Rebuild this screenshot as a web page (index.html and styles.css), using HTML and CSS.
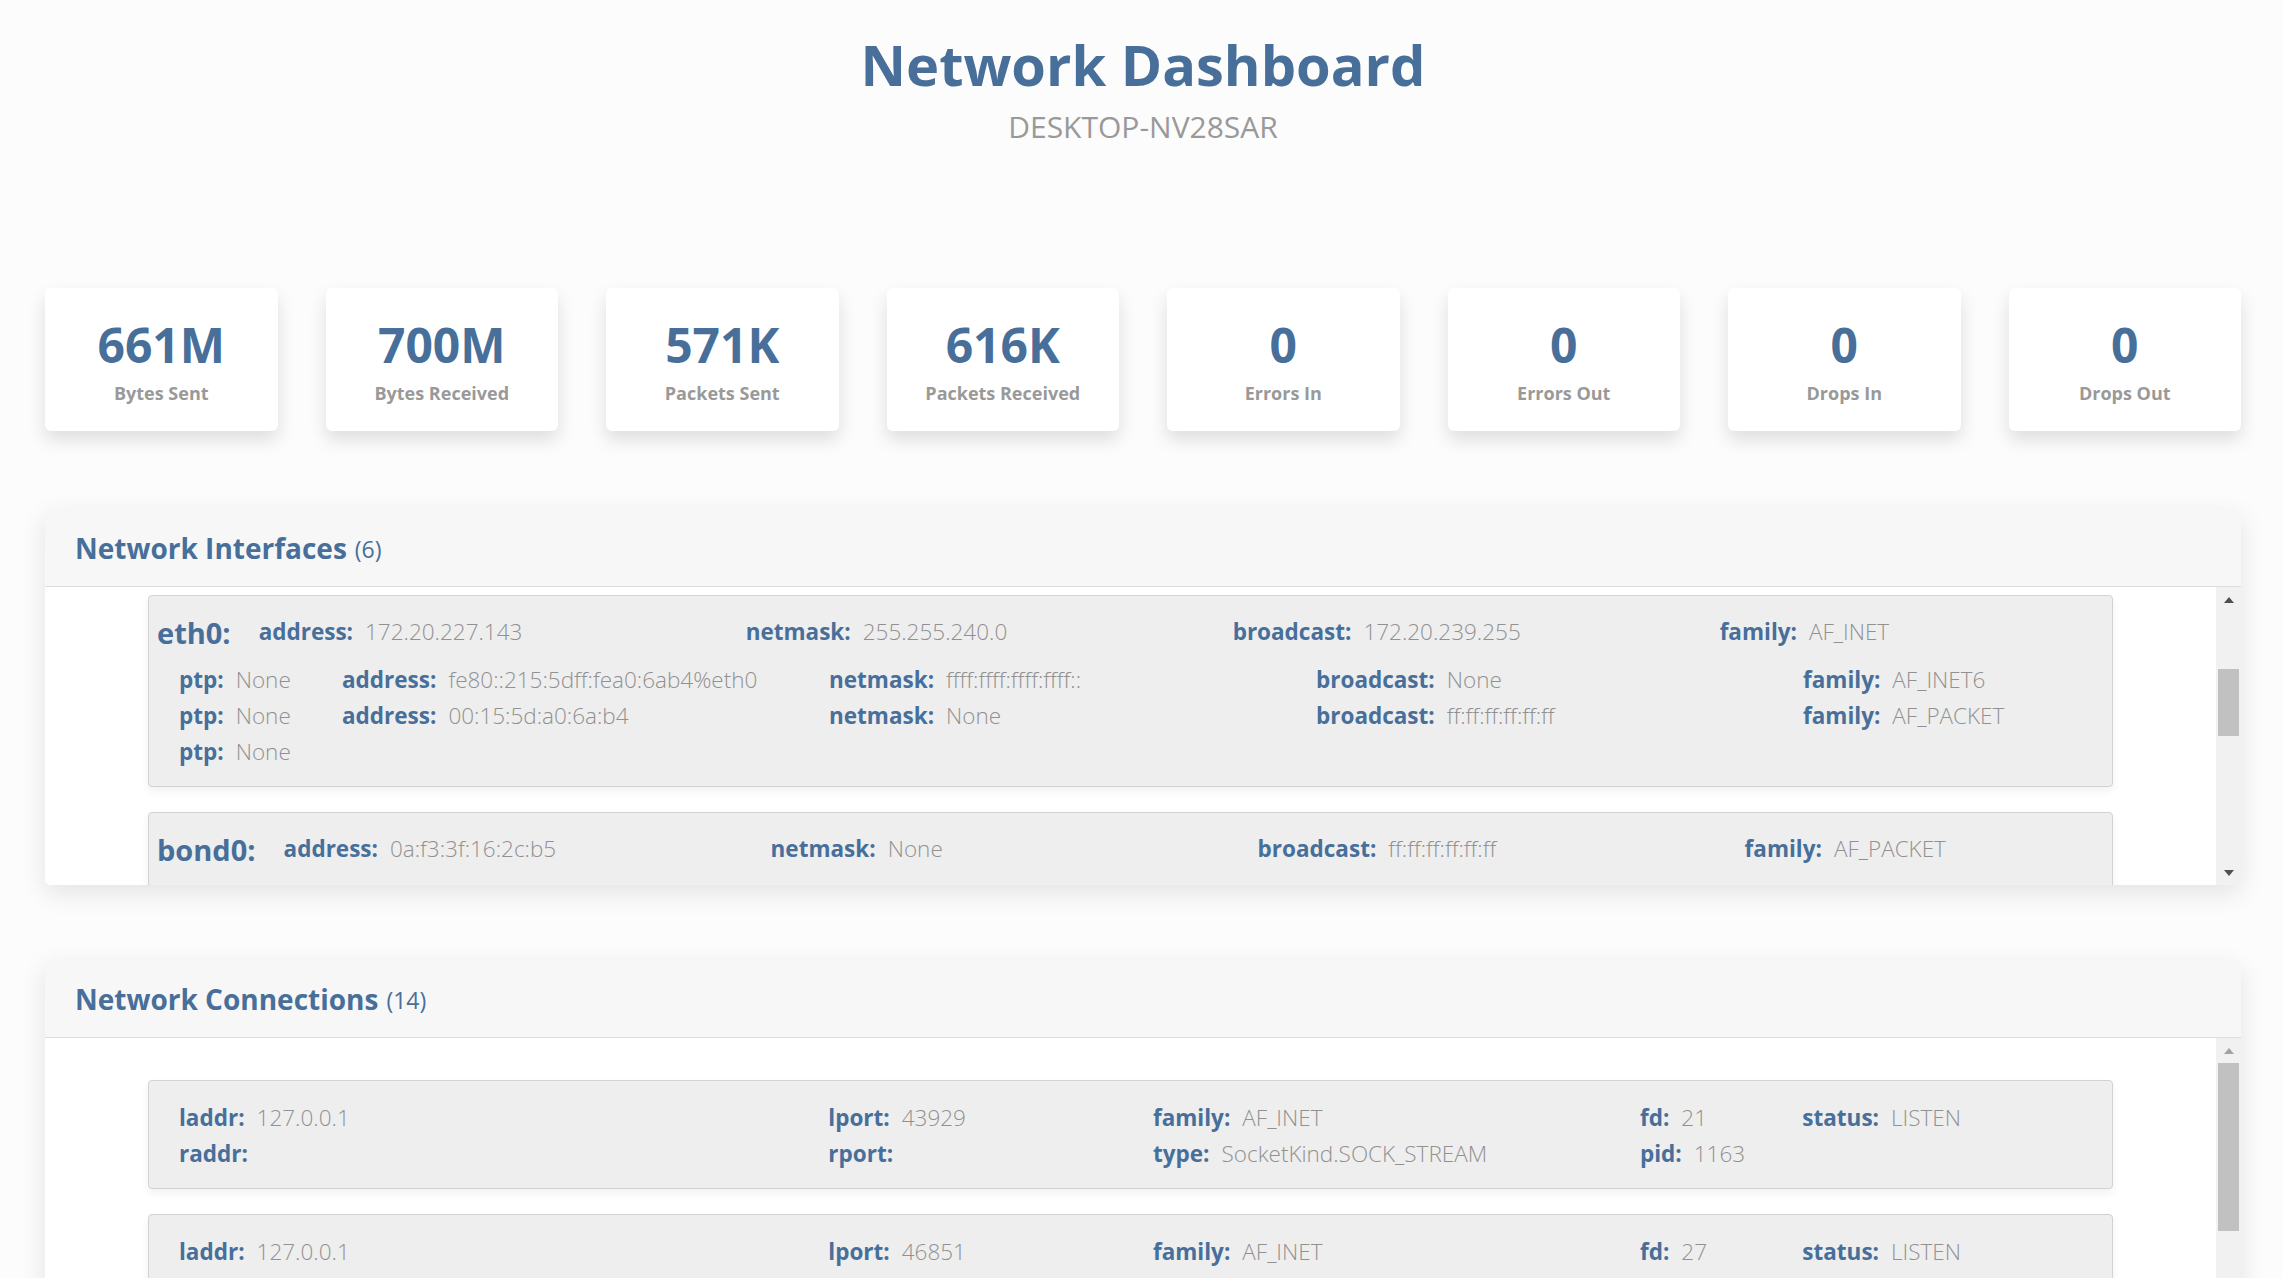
FILE: index.html
```html
<!DOCTYPE html>
<html lang="en">
<head>
<meta charset="utf-8">
<title>Network Dashboard</title>
<link rel="stylesheet" href="styles.css">
</head>
<body>
<div class="page">
  <header class="top">
    <h1 class="title">Network Dashboard</h1>
    <p class="host">DESKTOP-NV28SAR</p>
  </header>

  <section class="stats">
    <div class="stat"><div class="stat-num">661M</div><div class="stat-label">Bytes Sent</div></div>
    <div class="stat"><div class="stat-num">700M</div><div class="stat-label">Bytes Received</div></div>
    <div class="stat"><div class="stat-num">571K</div><div class="stat-label">Packets Sent</div></div>
    <div class="stat"><div class="stat-num">616K</div><div class="stat-label">Packets Received</div></div>
    <div class="stat"><div class="stat-num">0</div><div class="stat-label">Errors In</div></div>
    <div class="stat"><div class="stat-num">0</div><div class="stat-label">Errors Out</div></div>
    <div class="stat"><div class="stat-num">0</div><div class="stat-label">Drops In</div></div>
    <div class="stat"><div class="stat-num">0</div><div class="stat-label">Drops Out</div></div>
  </section>

  <section class="panel" id="ifaces">
    <div class="panel-head"><span class="panel-title">Network Interfaces</span><span class="count">(6)</span></div>
    <div class="panel-body">
      <div class="list">
        <div class="item iface">
          <div class="if-row"><span class="if-name">lo:</span>
            <span class="cell"><b class="k">address:</b><span class="v">127.0.0.1</span></span>
            <span class="cell"><b class="k">netmask:</b><span class="v">255.0.0.0</span></span>
            <span class="cell"><b class="k">broadcast:</b><span class="v">None</span></span>
            <span class="cell"><b class="k">family:</b><span class="v">AF_INET</span></span>
          </div>
          <div class="sub">
            <div class="sub-row"><span class="ptp"><b class="k">ptp:</b><span class="v">None</span></span>
              <span class="cell"><b class="k">address:</b><span class="v">::1</span></span>
              <span class="cell"><b class="k">netmask:</b><span class="v">ffff:ffff:ffff:ffff:ffff:ffff:ffff:ffff</span></span>
              <span class="cell"><b class="k">broadcast:</b><span class="v">None</span></span>
              <span class="cell"><b class="k">family:</b><span class="v">AF_INET6</span></span>
            </div>
            <div class="sub-row"><span class="ptp"><b class="k">ptp:</b><span class="v">None</span></span>
              <span class="cell"><b class="k">address:</b><span class="v">00:00:00:00:00:00</span></span>
              <span class="cell"><b class="k">netmask:</b><span class="v">None</span></span>
              <span class="cell"><b class="k">broadcast:</b><span class="v">None</span></span>
              <span class="cell"><b class="k">family:</b><span class="v">AF_PACKET</span></span>
            </div>
            <div class="sub-row"><span class="ptp"><b class="k">ptp:</b><span class="v">None</span></span></div>
          </div>
        </div>

        <div class="item iface" id="if-eth0">
          <div class="if-row"><span class="if-name">eth0:</span>
            <span class="cell"><b class="k">address:</b><span class="v">172.20.227.143</span></span>
            <span class="cell"><b class="k">netmask:</b><span class="v">255.255.240.0</span></span>
            <span class="cell"><b class="k">broadcast:</b><span class="v">172.20.239.255</span></span>
            <span class="cell"><b class="k">family:</b><span class="v">AF_INET</span></span>
          </div>
          <div class="sub">
            <div class="sub-row"><span class="ptp"><b class="k">ptp:</b><span class="v">None</span></span>
              <span class="cell"><b class="k">address:</b><span class="v">fe80::215:5dff:fea0:6ab4%eth0</span></span>
              <span class="cell"><b class="k">netmask:</b><span class="v">ffff:ffff:ffff:ffff::</span></span>
              <span class="cell"><b class="k">broadcast:</b><span class="v">None</span></span>
              <span class="cell"><b class="k">family:</b><span class="v">AF_INET6</span></span>
            </div>
            <div class="sub-row"><span class="ptp"><b class="k">ptp:</b><span class="v">None</span></span>
              <span class="cell"><b class="k">address:</b><span class="v">00:15:5d:a0:6a:b4</span></span>
              <span class="cell"><b class="k">netmask:</b><span class="v">None</span></span>
              <span class="cell"><b class="k">broadcast:</b><span class="v">ff:ff:ff:ff:ff:ff</span></span>
              <span class="cell"><b class="k">family:</b><span class="v">AF_PACKET</span></span>
            </div>
            <div class="sub-row"><span class="ptp"><b class="k">ptp:</b><span class="v">None</span></span></div>
          </div>
        </div>

        <div class="item iface">
          <div class="if-row"><span class="if-name">bond0:</span>
            <span class="cell"><b class="k">address:</b><span class="v">0a:f3:3f:16:2c:b5</span></span>
            <span class="cell"><b class="k">netmask:</b><span class="v">None</span></span>
            <span class="cell"><b class="k">broadcast:</b><span class="v">ff:ff:ff:ff:ff:ff</span></span>
            <span class="cell"><b class="k">family:</b><span class="v">AF_PACKET</span></span>
          </div>
          <div class="sub">
            <div class="sub-row"><span class="ptp"><b class="k">ptp:</b><span class="v">None</span></span></div>
          </div>
        </div>

        <div class="item iface">
          <div class="if-row"><span class="if-name">dummy0:</span>
            <span class="cell"><b class="k">address:</b><span class="v">ae:3e:1c:0b:55:7f</span></span>
            <span class="cell"><b class="k">netmask:</b><span class="v">None</span></span>
            <span class="cell"><b class="k">broadcast:</b><span class="v">ff:ff:ff:ff:ff:ff</span></span>
            <span class="cell"><b class="k">family:</b><span class="v">AF_PACKET</span></span>
          </div>
          <div class="sub">
            <div class="sub-row"><span class="ptp"><b class="k">ptp:</b><span class="v">None</span></span></div>
          </div>
        </div>

        <div class="item iface">
          <div class="if-row"><span class="if-name">tunl0:</span>
            <span class="cell"><b class="k">address:</b><span class="v">00:00:00:00</span></span>
            <span class="cell"><b class="k">netmask:</b><span class="v">None</span></span>
            <span class="cell"><b class="k">broadcast:</b><span class="v">None</span></span>
            <span class="cell"><b class="k">family:</b><span class="v">AF_PACKET</span></span>
          </div>
          <div class="sub">
            <div class="sub-row"><span class="ptp"><b class="k">ptp:</b><span class="v">None</span></span></div>
          </div>
        </div>

        <div class="item iface">
          <div class="if-row"><span class="if-name">sit0:</span>
            <span class="cell"><b class="k">address:</b><span class="v">00:00:00:00</span></span>
            <span class="cell"><b class="k">netmask:</b><span class="v">None</span></span>
            <span class="cell"><b class="k">broadcast:</b><span class="v">None</span></span>
            <span class="cell"><b class="k">family:</b><span class="v">AF_PACKET</span></span>
          </div>
          <div class="sub">
            <div class="sub-row"><span class="ptp"><b class="k">ptp:</b><span class="v">None</span></span></div>
          </div>
        </div>
      </div>
      <div class="vscroll">
        <div class="sb-btn"><span class="arrow-up"></span></div>
        <div class="sb-track"><div class="sb-thumb"></div></div>
        <div class="sb-btn"><span class="arrow-down"></span></div>
      </div>
    </div>
  </section>

  <section class="panel" id="conns">
    <div class="panel-head"><span class="panel-title">Network Connections</span><span class="count">(14)</span></div>
    <div class="panel-body tall">
      <div class="list" id="conn-list"></div>
      <div class="vscroll">
        <div class="sb-btn disabled"><span class="arrow-up"></span></div>
        <div class="sb-track"><div class="sb-thumb"></div></div>
        <div class="sb-btn"><span class="arrow-down"></span></div>
      </div>
    </div>
  </section>
</div>
<script src="script.js"></script>
</body>
</html>
```

FILE: styles.css
```css
* { box-sizing: border-box; }
html, body { margin: 0; }
body {
  background: #fcfcfc;
  font-family: "Open Sans", "Segoe UI", "Noto Sans", sans-serif;
  color: #476f9a;
}
.page { width: 2196px; margin: 0 0 0 45px; padding-bottom: 60px; }

.top { text-align: center; padding-top: 26px; }
.title { margin: 0; font-size: 56px; line-height: 76px; font-weight: 700; color: #476f9a; }
.host { margin: 5px 0 0; font-size: 30px; line-height: 40px; color: #999; font-weight: 400; }

.stats { display: grid; grid-template-columns: repeat(8, 1fr); gap: 48px; margin-top: 141px; }
.stat {
  background: #fff; border-radius: 6px; height: 143px; padding-top: 27px; text-align: center;
  box-shadow: 0 9px 18px rgba(0, 0, 0, 0.12);
}
.stat-num { font-size: 48px; line-height: 60px; font-weight: 700; color: #476f9a; }
.stat-label { margin-top: 6px; font-size: 18px; line-height: 24px; font-weight: 700; color: #999; }

.panel {
  background: #fff; border-radius: 5px; overflow: hidden; margin-top: 78px;
  box-shadow: 0 8px 26px rgba(0, 0, 0, 0.1);
}
.panel + .panel { margin-top: 75px; }
.panel-head {
  height: 78px; background: #f7f7f7; border-bottom: 1px solid #ddd;
  display: flex; align-items: center; padding-left: 30px;
}
.panel-title { font-size: 28px; font-weight: 700; color: #476f9a; }
.count { font-size: 23px; font-weight: 400; margin-left: 8px; color: #476f9a; padding-top: 3px; }

.panel-body { display: flex; height: 298px; }
.panel-body.tall { height: 600px; }
.list { flex: 1; position: relative; overflow: hidden; padding: 42px 103px; }

.item {
  background: #eee; border: 1px solid #d2d2d2; border-radius: 4px; margin-bottom: 25px;
  box-shadow: 0 4px 8px rgba(0, 0, 0, 0.06); white-space: nowrap; overflow: hidden;
}
.iface { padding: 17px 0 16px 8px; }
.if-row { display: flex; align-items: center; height: 38px; }
.if-name { font-size: 29px; font-weight: 700; margin-right: 28px; color: #476f9a; }
.cell { flex: 0 0 487px; font-size: 22.5px; line-height: 36px; }
.sub { margin-top: 11px; padding-left: 22px; }
.sub-row { display: flex; align-items: center; height: 36px; }
.ptp { flex: 0 0 163px; font-size: 22.5px; line-height: 36px; }

.k { font-weight: 700; color: #476f9a; margin-right: 12px; }
.v { font-weight: 300; color: #919191; }

.conn { padding: 19px 0 16px 30px; }
.conn-grid { display: grid; grid-template-columns: repeat(12, 162.33px); grid-auto-rows: 36px; font-size: 22.5px; line-height: 36px; }
.s1 { grid-column: span 1; }
.s2 { grid-column: span 2; }
.s3 { grid-column: span 3; }
.s4 { grid-column: span 4; }

.vscroll { flex: 0 0 25px; background: #f1f1f1; display: flex; flex-direction: column; }
.sb-btn { height: 25px; display: flex; align-items: center; justify-content: center; }
.arrow-up { width: 0; height: 0; border-left: 5.5px solid transparent; border-right: 5.5px solid transparent; border-bottom: 6px solid #505050; }
.arrow-down { width: 0; height: 0; border-left: 5.5px solid transparent; border-right: 5.5px solid transparent; border-top: 6px solid #505050; }
.sb-btn.disabled .arrow-up { border-bottom-color: #a3a3a3; }
.sb-track { flex: 1; }
.sb-thumb { margin: 0 2px; background: #c1c1c1; height: 60px; }
```

FILE: script.js
```js
(function () {
  var conns = [
    ["127.0.0.1", "43929", "AF_INET", "21", "LISTEN", "", "", "SocketKind.SOCK_STREAM", "1163"],
    ["127.0.0.1", "46851", "AF_INET", "27", "LISTEN", "", "", "SocketKind.SOCK_STREAM", "1163"],
    ["127.0.0.1", "43929", "AF_INET", "24", "ESTABLISHED", "127.0.0.1", "52014", "SocketKind.SOCK_STREAM", "1163"],
    ["127.0.0.1", "52014", "AF_INET", "19", "ESTABLISHED", "127.0.0.1", "43929", "SocketKind.SOCK_STREAM", "1121"],
    ["127.0.0.1", "46851", "AF_INET", "31", "ESTABLISHED", "127.0.0.1", "52030", "SocketKind.SOCK_STREAM", "1163"],
    ["127.0.0.1", "52030", "AF_INET", "22", "ESTABLISHED", "127.0.0.1", "46851", "SocketKind.SOCK_STREAM", "1121"],
    ["0.0.0.0", "8050", "AF_INET", "5", "LISTEN", "", "", "SocketKind.SOCK_STREAM", "2087"],
    ["172.20.227.143", "8050", "AF_INET", "9", "ESTABLISHED", "172.20.224.1", "61544", "SocketKind.SOCK_STREAM", "2087"],
    ["172.20.227.143", "8050", "AF_INET", "10", "ESTABLISHED", "172.20.224.1", "61545", "SocketKind.SOCK_STREAM", "2087"],
    ["127.0.0.1", "39447", "AF_INET", "18", "LISTEN", "", "", "SocketKind.SOCK_STREAM", "1121"],
    ["::", "22", "AF_INET6", "4", "LISTEN", "", "", "SocketKind.SOCK_STREAM", "412"],
    ["0.0.0.0", "22", "AF_INET", "3", "LISTEN", "", "", "SocketKind.SOCK_STREAM", "412"],
    ["127.0.0.53", "53", "AF_INET", "13", "NONE", "", "", "SocketKind.SOCK_DGRAM", "188"],
    ["172.20.227.143", "41822", "AF_INET", "26", "TIME_WAIT", "140.82.112.3", "443", "SocketKind.SOCK_STREAM", "1163"]
  ];
  var list = document.getElementById("conn-list");
  function cell(cls, k, v) {
    return '<span class="' + cls + '"><b class="k">' + k + ':</b><span class="v">' + v + '</span></span>';
  }
  var html = "";
  conns.forEach(function (c) {
    html += '<div class="item conn"><div class="conn-grid">' +
      cell("s4", "laddr", c[0]) + cell("s2", "lport", c[1]) + cell("s3", "family", c[2]) +
      cell("s1", "fd", c[3]) + cell("s2", "status", c[4]) +
      cell("s4", "raddr", c[5]) + cell("s2", "rport", c[6]) + cell("s3", "type", c[7]) +
      cell("s1", "pid", c[8]) + '</div></div>';
  });
  list.innerHTML = html;

  var ifList = document.querySelector("#ifaces .list");
  var eth0 = document.getElementById("if-eth0");
  ifList.scrollTop = eth0.offsetTop - 8;

  function syncThumb(panel) {
    var l = panel.querySelector(".list");
    var track = panel.querySelector(".sb-track");
    var thumb = panel.querySelector(".sb-thumb");
    var th = track.clientHeight;
    var h = Math.round(th * l.clientHeight / l.scrollHeight);
    var max = l.scrollHeight - l.clientHeight;
    var top = max > 0 ? Math.round((th - h) * l.scrollTop / max) : 0;
    thumb.style.height = h + "px";
    thumb.style.marginTop = top + "px";
  }
  syncThumb(document.getElementById("ifaces"));
  syncThumb(document.getElementById("conns"));
})();
```
